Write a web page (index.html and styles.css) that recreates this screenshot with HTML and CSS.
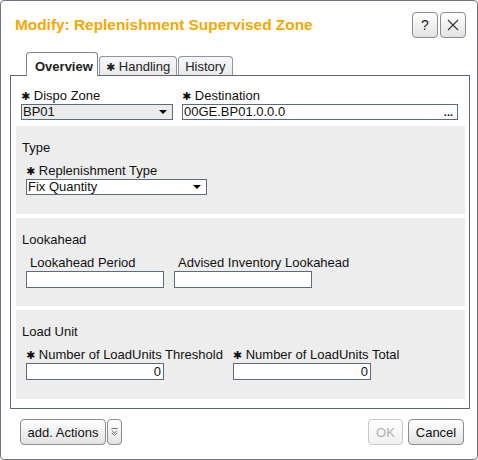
FILE: index.html
```html
<!DOCTYPE html>
<html>
<head>
<meta charset="utf-8">
<link rel="stylesheet" href="styles.css">
</head>
<body>
<div class="dialog">
  <div class="header">
    <div class="title">Modify: Replenishment Supervised Zone</div>
    <div class="hbtns">
      <button class="hbtn">?</button>
      <button class="hbtn"><svg width="12" height="12" viewBox="0 0 12 12"><path d="M1 1L11 11M11 1L1 11" stroke="#333" stroke-width="1.1" fill="none"/></svg></button>
    </div>
  </div>
  <div class="tabs">
    <div class="tab active">Overview</div>
    <div class="tab"><span class="star">✱</span> Handling</div>
    <div class="tab">History</div>
  </div>
  <div class="panel">
    <div class="toprow">
      <div class="field">
        <div class="label"><span class="star">✱</span> Dispo Zone</div>
        <div class="select gray dispo"><span>BP01</span><span class="arrow"></span></div>
      </div>
      <div class="field">
        <div class="label"><span class="star">✱</span> Destination</div>
        <div class="input dest"><span>00GE.BP01.0.0.0</span><span class="dots">...</span></div>
      </div>
    </div>
    <div class="section">
      <div class="heading">Type</div>
      <div class="row">
        <div class="field">
          <div class="label"><span class="star">✱</span> Replenishment Type</div>
          <div class="select rtype"><span>Fix Quantity</span><span class="arrow"></span></div>
        </div>
      </div>
    </div>
    <div class="section">
      <div class="heading">Lookahead</div>
      <div class="row">
        <div class="field">
          <div class="label plain">Lookahead Period</div>
          <div class="input num"></div>
        </div>
        <div class="field">
          <div class="label plain">Advised Inventory Lookahead</div>
          <div class="input num"></div>
        </div>
      </div>
    </div>
    <div class="section">
      <div class="heading">Load Unit</div>
      <div class="row">
        <div class="field">
          <div class="label"><span class="star">✱</span> Number of LoadUnits Threshold</div>
          <div class="input num right">0</div>
        </div>
        <div class="field">
          <div class="label"><span class="star">✱</span> Number of LoadUnits Total</div>
          <div class="input num right">0</div>
        </div>
      </div>
    </div>
  </div>
  <div class="footer">
    <div class="left">
      <button class="btn actions">add. Actions</button>
      <button class="btn more"><svg width="7" height="10" viewBox="0 0 7 10"><path d="M0.5 1.5H6.5M0.8 3.5L3.5 6.2L6.2 3.5M0.8 5.8L3.5 8.5L6.2 5.8" stroke="#666" stroke-width="0.9" fill="none"/></svg></button>
    </div>
    <div class="right">
      <button class="btn ok" disabled>OK</button>
      <button class="btn cancel">Cancel</button>
    </div>
  </div>
</div>
</body>
</html>
```

FILE: styles.css
```css
* { box-sizing: border-box; }
html, body { margin: 0; padding: 0; background: #fff; }
body { font-family: "Liberation Sans", Arial, sans-serif; font-size: 13px; color: #111; }

.dialog {
  width: 478px;
  height: 460px;
  border: 1px solid #6f7582;
  border-radius: 4px;
  background: #fff;
  display: flex;
  flex-direction: column;
}

.header {
  display: flex;
  align-items: center;
  justify-content: space-between;
  padding: 11px 11px 0 14px;
  height: 37px;
}
.title {
  color: #f5a800;
  font-weight: bold;
  font-size: 15.4px;
}
.hbtns { display: flex; gap: 2px; }
.hbtn {
  width: 26px;
  height: 26px;
  padding: 0;
  border: 1px solid #8c8c8c;
  border-radius: 4px;
  background: linear-gradient(#ffffff, #e2e2e2);
  font-family: "Liberation Sans", Arial, sans-serif;
  font-size: 14px;
  color: #222;
  display: flex;
  align-items: center;
  justify-content: center;
}

.tabs {
  display: flex;
  align-items: flex-end;
  margin: 14px 0 0 25px;
  gap: 1px;
}
.tab {
  height: 20px;
  border: 1px solid #8d95a3;
  border-bottom: none;
  border-radius: 4px 4px 0 0;
  background: linear-gradient(#f8f8f8, #e9e9e9);
  padding: 0 6px;
  line-height: 20px;
  margin-bottom: -1px;
  color: #222;
}
.tab.active {
  height: 24px;
  background: #fff;
  font-weight: bold;
  padding: 4px 7px 0 8px;
  position: relative;
  z-index: 1;
  width: 72px;
  border-color: #7c8594;
}
.star { font-size: 11px; font-family: "DejaVu Sans", sans-serif; line-height: 1; }

.panel {
  margin: 0 0 0 9px;
  width: 460px;
  height: 334px;
  border: 1px solid #5c6576;
  padding: 12px 4px 0 5px;
}
.toprow {
  display: flex;
  gap: 9px;
  padding-left: 5px;
  margin-bottom: 6px;
}
.label { line-height: 16px; height: 16px; white-space: nowrap; }
.label.plain { padding-left: 4px; }

.select, .input {
  height: 16px;
  border: 1px solid #5c6a80;
  display: flex;
  align-items: center;
  justify-content: space-between;
  padding: 0 3px 0 1px;
  line-height: 14px;
}
.select.gray { background: #ebebeb; }
.select { background: #fff; }
.arrow {
  width: 0; height: 0;
  border-left: 4px solid transparent;
  border-right: 4px solid transparent;
  border-top: 4px solid #000;
  margin-right: 2px;
}
.dispo { width: 152px; }
.dest { width: 276px; background: #fff; }
.dots { font-weight: bold; font-size: 11px; margin-right: 1px; line-height: 10px; }
.rtype { width: 181px; }
.input.num { width: 138px; height: 17px; background: #fff; }
.input.right { justify-content: flex-end; padding-right: 2px; }

.section {
  background: #ededed;
  padding: 14px 0 0 6px;
  margin-bottom: 4px;
}
.section:nth-of-type(2) { height: 88px; }
.section:nth-of-type(3) { height: 88px; }
.section:nth-of-type(4) { height: 89px; }
.heading { line-height: 16px; margin-bottom: 7px; }
.row { display: flex; gap: 10px; padding-left: 4px; }

.footer {
  display: flex;
  justify-content: space-between;
  padding: 10px 13px 0 19px;
}
.left, .right { display: flex; gap: 1px; }
.right { gap: 5px; }
.btn {
  height: 26px;
  border: 1px solid #8c8c8c;
  border-radius: 4px;
  background: linear-gradient(#ffffff, #e2e2e2);
  font-family: "Liberation Sans", Arial, sans-serif;
  font-size: 13px;
  color: #111;
  padding: 0;
}
.actions { width: 86px; }
.more { width: 15px; display: flex; align-items: center; justify-content: center; }
.ok { width: 35px; color: #b0b0b0; border-color: #c8c8c8; background: linear-gradient(#ffffff, #f0f0f0); }
.cancel { width: 56px; }
```
